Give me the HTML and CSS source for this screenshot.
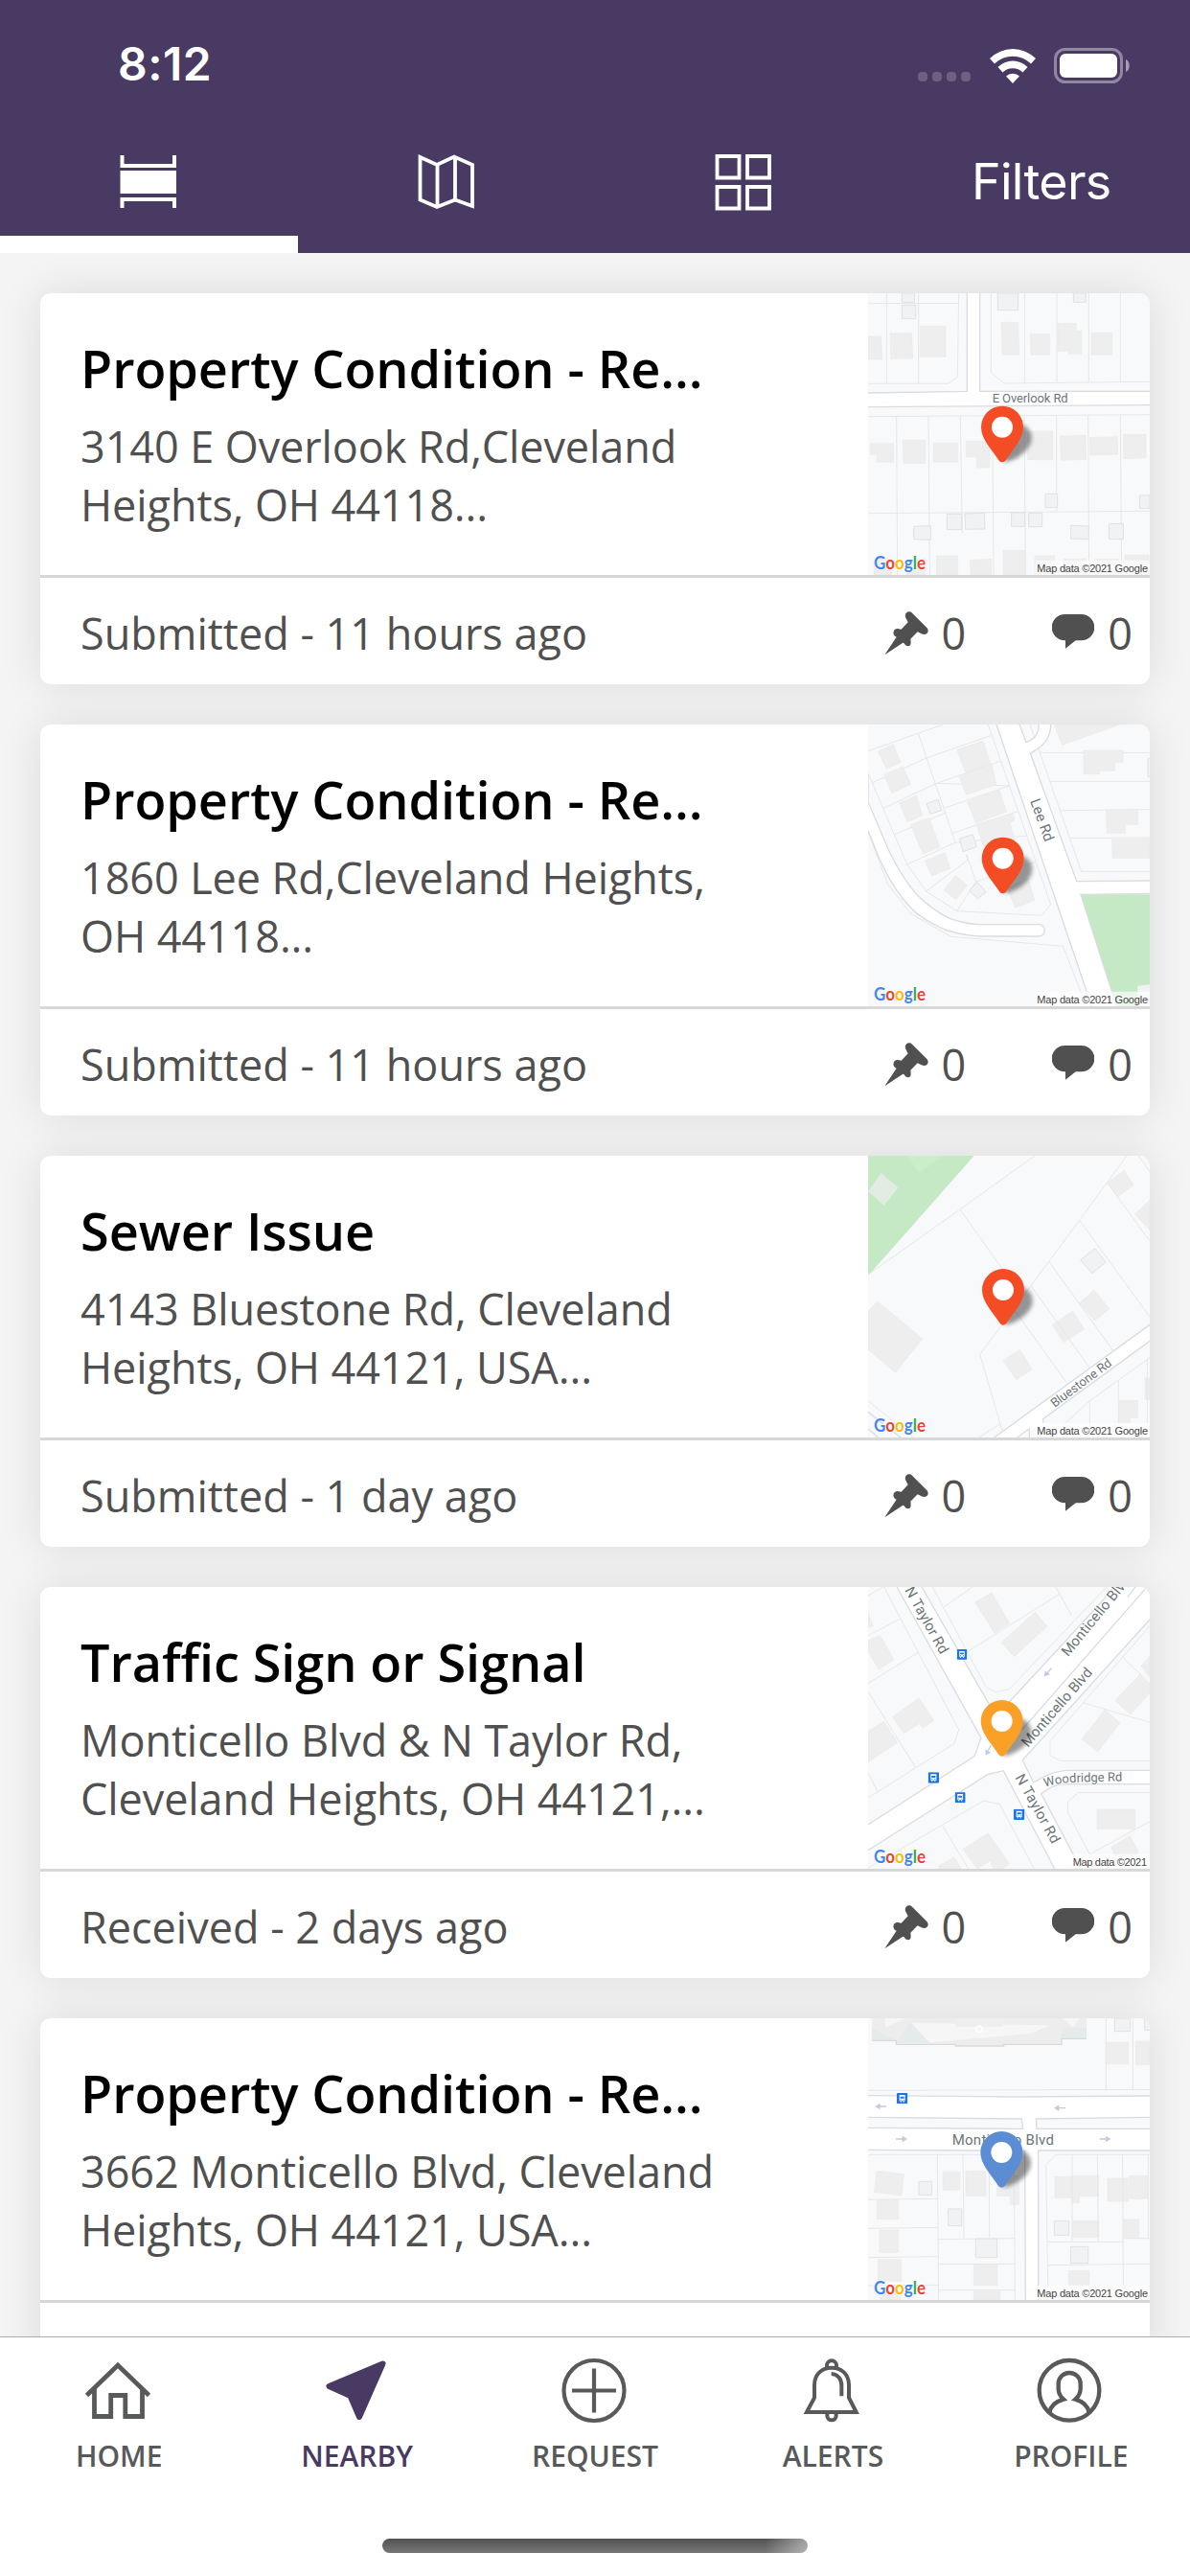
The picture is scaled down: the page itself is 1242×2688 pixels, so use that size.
FILE: index.html
```html
<!DOCTYPE html>
<html lang="en">
<head>
    <meta charset="UTF-8">
    <meta name="viewport" content="width=device-width, initial-scale=1.0">
    <title>Nearby</title>
    <link rel="stylesheet" href="styles.css">
</head>
<body>
    <!-- shared shapes -->
    <svg class="defs" width="0" height="0">
        <defs>
            <filter id="blur" x="-50%" y="-50%" width="200%" height="200%"><feGaussianBlur stdDeviation="7"/></filter>
            <symbol id="marker" viewBox="-80 -190 200 220">
                <path d="M4 0C34 -2 92 -36 92 -76C92 -92 84 -108 62 -118L10 -40Z" fill="#000" opacity=".4" filter="url(#blur)"/>
                <path d="M0 0c-8 0-11-6-16-14C-36-44-66-74-66-110a66 66 0 0 1 132 0C66-74 36-44 16-14C11-6 8 0 0 0Z" fill="currentColor"/>
                <circle cx="0" cy="-110" r="33" fill="#fff"/>
            </symbol>
            <symbol id="bus" viewBox="0 0 34 34">
                <rect width="34" height="34" rx="3" fill="#1a73e8"/>
                <path d="M8 6h18v19h-3v4h-3v-4h-6v4h-3v-4H8z" fill="#fff"/>
                <path d="M11 11h12v6H11zM11 20h3v3h-3zM20 20h3v3h-3z" fill="#1a73e8"/>
            </symbol>
            <symbol id="arrow" viewBox="0 0 36 24">
                <path d="M0 12L16 2V10H36V14H16V22Z" fill="#c5c9dd"/>
            </symbol>
            <symbol id="pushpin" viewBox="0 0 138 138">
                <path d="M1 136L38 80C24 76 25 54 42 54L53 56L74 34L67 20C60 6 76-6 87 5L133 51C144 64 130 78 116 70L104 64L82 86L83 98C83 112 68 112 62 100L58 98Z" fill="#505050"/>
            </symbol>
            <symbol id="bubble" viewBox="0 0 132 108">
                <path d="M40 0H92A40 40 0 0 1 92 82H74L42 107V82H40A40 40 0 0 1 40 0Z" fill="#505050"/>
            </symbol>
            <symbol id="google" viewBox="48 48 882 882">
                <text class="logo" x="66" y="911" textLength="162" lengthAdjust="spacingAndGlyphs"><tspan fill="#4285f4">G</tspan><tspan fill="#ea4335">o</tspan><tspan fill="#fbbc05">o</tspan><tspan fill="#4285f4">g</tspan><tspan fill="#34a853">l</tspan><tspan fill="#ea4335">e</tspan></text>
            </symbol>
        </defs>
    </svg>

    <header class="header">
        <div class="status-bar">
            <span class="time">8:12</span>
            <div class="status-icons">
                <div class="signal"><i></i><i></i><i></i><i></i></div>
                <svg class="wifi" viewBox="0 0 48 37">
                    <path d="M0 11A34 34 0 0 1 48 11L43 16.5A27 27 0 0 0 5 16.5ZM8.500 20A22 22 0 0 1 39.500 20L34.500 25.500A15 15 0 0 0 13.500 25.500ZM17 29.500A10 10 0 0 1 31 29.500L24 37Z" fill="#fff"/>
                </svg>
                <svg class="battery" viewBox="0 0 80 37">
                    <rect x="1.500" y="1.500" width="69" height="34" rx="10" fill="none" stroke="#fff" stroke-opacity=".4" stroke-width="3"/>
                    <rect x="6" y="6" width="60" height="25" rx="6" fill="#fff"/>
                    <path d="M75 12C80 14 80 23 75 25Z" fill="#fff" fill-opacity=".5"/>
                </svg>
            </div>
        </div>
        <nav class="views">
            <a class="view active">
                <svg viewBox="0 0 60 60" fill="none" stroke="#fff" stroke-width="4">
                    <path d="M2.500 2V13H57V2M2.500 57V48H57V57"/>
                    <rect x=".5" y="18" width="58.500" height="24" fill="#fff" stroke="none"/>
                </svg>
            </a>
            <a class="view">
                <svg viewBox="0 0 60 60" fill="none" stroke="#fff" stroke-width="3.800">
                    <path d="M2.500 4L20 12L38 3.500L57 12V55L39 48.500L20 56L2.500 48.500ZM20.500 12V55M39 4V48"/>
                </svg>
            </a>
            <a class="view">
                <svg viewBox="0 0 60 60" fill="none" stroke="#fff" stroke-width="3.800">
                    <path d="M2.500 3H25.500V25.500H2.500ZM34 3H57V25.500H34ZM2.500 35H25.500V57.500H2.500ZM34 35H57V57.500H34Z"/>
                </svg>
            </a>
            <a class="view filters">Filters</a>
        </nav>
    </header>

    <main class="list">
        <article class="card">
            <div class="card-body">
                <div class="info">
                    <h2>Property Condition - Re...</h2>
                    <p>3140 E Overlook Rd,Cleveland<br>Heights, OH 44118...</p>
                </div>
                <svg class="map" viewBox="48 48 882 882">
                    <g class="parcel">
                        <path d="M48 80H332M106 48V331M206 48V331M332 48L328 310L300 331H48M433 48V296L474 330L930 325M538 48V328M639 48V327M739 48V326M838 48V325M48 434L930 428M48 737L930 730M137 434L140 930M237 433L241 930M337 433L343 800M437 433L441 930M537 432L541 930M638 431V731M737 430L740 930M838 430L842 930"/>
                    </g>
                    <g class="house">
                        <path d="M48 183H89L92 255H48ZM117 174L185 173L188 251L119 253ZM211 151H291V247H211ZM465 139H518L521 241H469ZM556 176H617V241H558ZM642 142H700V165H716V238H676V230H642ZM747 172H812V241H747ZM55 518H128V577H76V553H55ZM157 508H227V580H159ZM253 517H329V577H253ZM355 511H429V594H388V560H355ZM450 520H520V568H450ZM548 480H626V569H548ZM649 496L729 492L731 568L652 571ZM742 500L828 497L830 552L744 556ZM847 490H918V562L849 566ZM262 870H329V930H262ZM367 883L434 880V930H370ZM471 853H540V930H471ZM570 870H632V930H570ZM660 880H730V930H660ZM760 880H832V930H760ZM853 868H927V930H853ZM67 878H122V930H67ZM168 880H228V930H168Z"/>
                    </g>
                    <g class="shed">
                        <path d="M154 48H194V76H154ZM154 85H197V128H154ZM454 48H518V101H454ZM691 48H730V76H691ZM603 676H641V719H603ZM898 681H930V721H898ZM191 778L244 776V820L191 818ZM295 739H341V788H295ZM351 738L412 736L414 786L353 787ZM497 735H539V778H497ZM551 736H593V779H551ZM683 775L739 777V818L683 816ZM802 770L847 769V818H802Z"/>
                    </g>
                    <path class="road" d="M358 48V355L48 360V404L930 398V355H398V48Z"/>
                    <path class="kerb" d="M358 48V355L48 360M48 404L930 398M930 355H398V48"/>
                    <text class="street" x="437" y="390" textLength="237">E Overlook Rd</text>
                    <use href="#marker" x="388" y="387" width="200" height="220" color="#f44d25"/>
                    <use href="#google" x="48" y="48" width="882" height="882"/>
                    <rect class="credit-bg" x="571" y="884" width="359" height="46"/>
                    <text class="credit" x="577" y="920" textLength="347">Map data ©2021 Google</text>
                </svg>
            </div>
            <div class="card-footer">
                <span>Submitted - 11 hours ago</span>
                <div class="stats">
                    <span class="stat"><svg class="pushpin"><use href="#pushpin"/></svg>0</span>
                    <span class="stat"><svg class="bubble"><use href="#bubble"/></svg>0</span>
                </div>
            </div>
        </article>

        <article class="card">
            <div class="card-body">
                <div class="info">
                    <h2>Property Condition - Re...</h2>
                    <p>1860 Lee Rd,Cleveland Heights,<br>OH 44118...</p>
                </div>
                <svg class="map" viewBox="48 48 882 882">
                    <g class="parcel">
                        <path d="M48 131L283 48M205 75L321 416M424 48L620 612L592 646L326 632L230 570L170 486L48 200M62 230L230 153L432 83M96 310L258 234L464 162M132 392L290 324M260 232L490 240M288 309L490 240M313 388L516 320M170 486L320 418L546 396M230 570L360 472L356 455L386 540L326 632M386 540L572 478M555 48L716 508H930M586 136H930M618 226H930M652 317L930 314M683 404L930 403M48 385L110 548L182 640L308 712L658 742L720 900"/>
                    </g>
                    <g class="house">
                        <path d="M79 132L127 110L150 167L106 187ZM98 205L157 180L182 235L123 263ZM146 293L199 271L218 333L171 353ZM181 362L239 340L273 432L220 453ZM226 475L289 449L305 499L247 522ZM285 567L322 520L359 551L323 596ZM326 127L408 99L432 170L353 198ZM333 210L435 172L449 236L356 268ZM359 290L459 252L482 321L386 356ZM388 360L501 326L507 346L493 356L508 410L408 430ZM484 560L550 530L569 598L509 622ZM631 48H836L656 112ZM723 129H846V166H820V193H773V203H723ZM793 315H893V361H854V388H796ZM812 402H930V466H813Z"/>
                    </g>
                    <g class="shed">
                        <path d="M231 296L268 283L278 317L243 328ZM334 405L376 392L388 431L345 446ZM390 541L417 572L391 594L365 567ZM924 155H940V212H924Z"/>
                    </g>
                    <path d="M714 580H930V930H826Z" fill="#c5e8c5"/>
                    <path d="M892 930V866L930 862V930Z" fill="#f1f2f4"/>
                    <path class="road" d="M48 290L112 440C140 500 170 545 200 580C240 620 270 640 305 656C340 668 370 674 400 674H583A18 18 0 0 1 583 711H400C360 709 320 700 288 690C240 668 210 650 190 630C130 570 100 505 78 455L48 380ZM450 48L748 930H826L714 580L930 577V537L701 539L556 138C600 115 620 90 620 48H583C583 75 570 95 543 104L522 48Z"/>
                    <path class="kerb" d="M48 205V290L112 440C140 500 170 545 200 580C240 620 270 640 305 656C340 668 370 674 400 674H583A18 18 0 0 1 583 711H400C360 709 320 700 288 690C240 668 210 650 190 630C130 570 100 505 78 455L48 380M450 48L748 930M826 930L714 580L930 577M930 537L701 539L556 138C600 115 620 90 620 48M583 48C583 75 570 95 543 104L522 48"/>
                    <text class="street large" transform="translate(555 287) rotate(70)" textLength="138">Lee Rd</text>
                    <use href="#marker" x="390" y="387" width="200" height="220" color="#f44d25"/>
                    <use href="#google" x="48" y="48" width="882" height="882"/>
                    <rect class="credit-bg" x="571" y="884" width="359" height="46"/>
                    <text class="credit" x="577" y="920" textLength="347">Map data ©2021 Google</text>
                </svg>
            </div>
            <div class="card-footer">
                <span>Submitted - 11 hours ago</span>
                <div class="stats">
                    <span class="stat"><svg class="pushpin"><use href="#pushpin"/></svg>0</span>
                    <span class="stat"><svg class="bubble"><use href="#bubble"/></svg>0</span>
                </div>
            </div>
        </article>

        <article class="card">
            <div class="card-body">
                <div class="info">
                    <h2>Sewer Issue</h2>
                    <p>4143 Bluestone Rd, Cleveland<br>Heights, OH 44121, USA...</p>
                </div>
                <svg class="map" viewBox="48 48 882 882">
                    <path d="M48 48H380L48 424Z" fill="#c5e8c5"/>
                    <path d="M170 48H282L210 102Z" fill="#caedca"/>
                    <path d="M89 102L142 148L98 203L48 160Z" fill="#e2ece2"/>
                    <g class="house">
                        <path d="M77 504L219 621L133 727L48 655V535ZM797 133L850 94L879 139L830 176ZM883 232L930 186V280ZM708 510L756 469L803 527L758 564ZM624 577L690 534L725 591L660 632ZM471 689L523 655L562 717L512 749ZM833 814H892V868H868V885H833ZM915 744H930V811H915Z"/>
                    </g>
                    <g class="shed">
                        <path d="M713 375L758 338L792 381L750 416Z"/>
                    </g>
                    <g class="parcel">
                        <path d="M48 420L336 216L570 48M336 216L470 405M858 48L710 250L398 670L468 908M895 48L930 98M797 133L930 315M710 250L930 552M615 380L815 658M558 455L742 712M510 535L672 762M48 815L190 930M460 888L395 930M930 680L742 815L660 890M742 815V885M832 750V885M922 685V885"/>
                    </g>
                    <path class="road" d="M443 930L930 577V628L596 872V884L514 930Z"/>
                    <path class="kerb" d="M443 930L930 577M930 628L596 872V884M514 930L553 903V930M48 850L150 930M48 903L80 930"/>
                    <text class="street" transform="translate(632 837) rotate(-36.500)" textLength="226">Bluestone Rd</text>
                    <use href="#marker" x="391" y="388" width="200" height="220" color="#f44d25"/>
                    <use href="#google" x="48" y="48" width="882" height="882"/>
                    <rect class="credit-bg" x="571" y="884" width="359" height="46"/>
                    <text class="credit" x="577" y="920" textLength="347">Map data ©2021 Google</text>
                </svg>
            </div>
            <div class="card-footer">
                <span>Submitted - 1 day ago</span>
                <div class="stats">
                    <span class="stat"><svg class="pushpin"><use href="#pushpin"/></svg>0</span>
                    <span class="stat"><svg class="bubble"><use href="#bubble"/></svg>0</span>
                </div>
            </div>
        </article>

        <article class="card">
            <div class="card-body">
                <div class="info">
                    <h2>Traffic Sign or Signal</h2>
                    <p>Monticello Blvd &amp; N Taylor Rd,<br>Cleveland Heights, OH 44121,...</p>
                </div>
                <svg class="map" viewBox="48 48 882 882">
                    <g class="house">
                        <path d="M383 96L435 66L491 162L444 192ZM465 222L571 127L609 171L506 266ZM48 215L86 200L129 276L81 307L48 250ZM124 455L207 396L254 466L219 490L209 475L161 506ZM48 500L98 468L140 535L48 596ZM822 403L899 321L930 350V380L869 447ZM903 295L930 265V330ZM717 524L790 432L837 473L767 564ZM765 744H884V805H765ZM809 862L868 827L896 878L880 890H822ZM345 868L424 819L491 915L470 930H440L430 905L390 930ZM270 920L318 894L340 930H270ZM48 130L64 170L48 175Z"/>
                    </g>
                    <g class="parcel">
                        <path d="M98 48L332 495L318 538L48 708M48 200L148 148M48 350L206 252M48 375L196 612M48 630L78 688M250 48L418 362L448 377L490 368L795 48M287 110L375 48M360 250L648 70M635 48L686 138M930 170L618 530V575L650 592H930M845 268L905 325M720 410L930 472M930 692H705L674 720V755L742 885M742 885L930 782M48 928L410 717L460 728L568 930M282 797L362 930M150 870L172 930M48 75L95 48"/>
                    </g>
                    <path class="road" d="M138 48L402 520L381 578L48 792V872L422 635L472 623L632 930H714L590 695C620 672 640 665 670 665H930V622H680C630 622 600 640 566 660L532 590L930 150V48H822L490 408L432 430L216 48Z"/>
                    <path class="kerb" d="M138 48L402 520L381 578L48 792M48 872L422 635L472 623L632 930M714 930L590 695C620 672 640 665 670 665H930M930 622H680C630 622 600 640 566 660L532 590L930 150M822 48L490 408M430 420L216 48M915 55L530 495M885 48L860 80"/>
                    <use href="#bus" x="326" y="242" width="32" height="34"/>
                    <use href="#bus" x="236" y="628" width="34" height="34"/>
                    <use href="#bus" x="320" y="690" width="33" height="34"/>
                    <use href="#bus" x="504" y="743" width="34" height="34"/>
                    <g transform="translate(599 328) rotate(-48)"><use href="#arrow" y="-12" width="36" height="24"/></g>
                    <g transform="translate(416 575) rotate(-62)"><use href="#arrow" y="-12" width="36" height="24"/></g>
                    <text class="street large" transform="translate(162 58) rotate(61)" textLength="232">N Taylor Rd</text>
                    <text class="street large" transform="translate(508 644) rotate(61)" textLength="240">N Taylor Rd</text>
                    <text class="street large" transform="translate(674 268) rotate(-50.500)" textLength="310">Monticello Blvd</text>
                    <text class="street large" transform="translate(548 552) rotate(-49)" textLength="312">Monticello Blvd</text>
                    <path id="woodridge" d="M602 675Q640 661 700 659L860 655" fill="none"/>
                    <text class="street"><textPath href="#woodridge">Woodridge Rd</textPath></text>
                    <use href="#marker" x="387" y="388" width="200" height="220" color="#fba026"/>
                    <use href="#google" x="48" y="48" width="882" height="882"/>
                    <rect class="credit-bg" x="684" y="884" width="246" height="46"/>
                    <text class="credit" x="689" y="920" textLength="232">Map data ©2021</text>
                </svg>
            </div>
            <div class="card-footer">
                <span>Received - 2 days ago</span>
                <div class="stats">
                    <span class="stat"><svg class="pushpin"><use href="#pushpin"/></svg>0</span>
                    <span class="stat"><svg class="bubble"><use href="#bubble"/></svg>0</span>
                </div>
            </div>
        </article>

        <article class="card">
            <div class="card-body">
                <div class="info">
                    <h2>Property Condition - Re...</h2>
                    <p>3662 Monticello Blvd, Cleveland<br>Heights, OH 44121, USA...</p>
                </div>
                <svg class="map" viewBox="48 48 882 882">
                    <path d="M60 48H732V112H654V130H473V135H322V130H136V118H60Z" fill="#ededed"/>
                    <path d="M60 78L136 118H60ZM180 62L240 125H136ZM654 78H732V112H654Z" fill="#e5eaeb"/>
                    <path d="M100 48H166L103 76ZM184 62L616 70L560 95L240 124ZM655 48H710L690 75Z" fill="#f6f6f6"/>
                    <path d="M60 118H136V130H322V135H473V130H654V112H732" fill="none" stroke="#d9dadb" stroke-width="4"/>
                    <path d="M324 48H470V75H324Z" fill="#eee"/>
                    <circle cx="396" cy="82" r="10" fill="none" stroke="#fff" stroke-width="5"/>
                    <g class="house">
                        <path d="M793 124H863V191H793ZM886 121H930V193H886ZM76 526L160 536L153 603L67 592ZM282 529H335V586H282ZM354 527H417V604H354ZM452 540H520V631H493V604H452ZM76 617H143V677H76ZM84 711H143V781H84ZM79 803H152V871H79ZM379 819H453V884H379ZM379 903H461V930H379ZM633 544H686V610H633ZM686 541H770V605H709V626H686ZM798 549H862V621H798ZM866 541H924V613H866ZM689 682H770V734H689ZM848 678H896V733H848ZM676 838H741V884H676ZM86 905H150V930H86Z"/>
                    </g>
                    <g class="shed">
                        <path d="M820 48H869V89H820ZM914 48H940V85H914ZM207 559H248V601H207ZM299 645H341V698H299ZM385 738H452V797H385ZM631 683H677V727H631ZM682 763H737V815H682Z"/>
                    </g>
                    <g class="parcel">
                        <path d="M793 48V272M877 48V272M48 274L930 271M48 475H505L508 930M265 475L269 930M345 475L348 737M427 475L428 737M48 616L266 613M48 706L267 703M48 797L268 794M48 885L268 883M268 740L508 737M269 818L508 817M269 899H508M930 475H636L605 506L611 884M687 475V748M766 475L769 748M845 475L847 884M925 475V735M611 748H847M847 737H930M611 821L930 817"/>
                    </g>
                    <path class="road" d="M48 290L930 292V460H581V930H541L539 463L48 460Z"/>
                    <path d="M48 358L529 363L533 394L48 391ZM574 363L930 358V394H576Z" fill="#f8f9fb"/>
                    <path class="kerb" d="M48 290L510 294L930 291M48 358L529 363L533 394L48 391M930 358L574 363L576 394H930M48 460L539 463L541 930M930 462H581V930"/>
                    <use href="#bus" x="138" y="282" width="34" height="34"/>
                    <use href="#arrow" x="70" y="312" width="36" height="24"/>
                    <use href="#arrow" x="630" y="317" width="36" height="24"/>
                    <g transform="translate(171 426) rotate(180)"><use href="#arrow" y="-12" width="36" height="24"/></g>
                    <g transform="translate(808 426) rotate(180)"><use href="#arrow" y="-12" width="36" height="24"/></g>
                    <text class="street large" x="311" y="444" textLength="319">Monticello Blvd</text>
                    <use href="#marker" x="386" y="388" width="200" height="220" color="#5a8dd3"/>
                    <use href="#google" x="48" y="48" width="882" height="882"/>
                    <rect class="credit-bg" x="571" y="884" width="359" height="46"/>
                    <text class="credit" x="577" y="920" textLength="347">Map data ©2021 Google</text>
                </svg>
            </div>
            <div class="card-footer">
                <span></span>
                <div class="stats">
                    <span class="stat"><svg class="pushpin"><use href="#pushpin"/></svg>0</span>
                    <span class="stat"><svg class="bubble"><use href="#bubble"/></svg>0</span>
                </div>
            </div>
        </article>
    </main>

    <footer class="tab-bar">
        <nav class="tabs">
            <a class="tab">
                <svg viewBox="0 0 72 72" fill="none" stroke="currentColor" stroke-width="4.800">
                    <path d="M3.500 41.500L36 10L68.500 41.500M11.500 35V63.500H28.700V41.500H43.800V63.500H61.500V35"/>
                </svg>
                HOME
            </a>
            <a class="tab active">
                <svg viewBox="0 0 72 72" fill="currentColor" stroke="currentColor" stroke-width="6" stroke-linejoin="round">
                    <path d="M64.500 8.500L8.500 32L30.500 42L40 64Z"/>
                </svg>
                NEARBY
            </a>
            <a class="tab">
                <svg viewBox="0 0 72 72" fill="none" stroke="currentColor" stroke-width="4.200">
                    <circle cx="36" cy="36.500" r="31.500"/>
                    <path d="M13 36.500H59M36 13.500V59.500"/>
                </svg>
                REQUEST
            </a>
            <a class="tab">
                <svg viewBox="0 0 216 216" fill="none" stroke="currentColor" stroke-width="12">
                    <path d="M30 177L54 132V92C54 58 78 38 108 38S162 58 162 92V132L185 177ZM93 37V31A15 15 0 0 1 123 31V37M94 181V188A14 14 0 0 0 122 188V181M107 57C127 58 139 74 139 94V127"/>
                </svg>
                ALERTS
            </a>
            <a class="tab">
                <svg viewBox="0 0 216 216" fill="none" stroke="currentColor" stroke-width="13">
                    <circle cx="108" cy="109" r="94"/>
                    <path d="M46 178C50 158 64 144 90 137C79 127 74 118 74 104V88A34.500 34 0 0 1 143 88V104C143 118 138 127 127 137C152 144 166 158 170 178"/>
                </svg>
                PROFILE
            </a>
        </nav>
        <div class="home-indicator"></div>
    </footer>
</body>
</html>
```
FILE: styles.css
```css
* {
    box-sizing: border-box;
}

body {
    margin: 0;
    width: 1242px;
    height: 2688px;
    display: flex;
    flex-direction: column;
    overflow: hidden;
    background-color: #f4f4f4;
    color: #505050;
    font-family: "Open Sans", "Noto Sans", sans-serif;
}

svg {
    display: block;
}

.defs {
    position: absolute;
}

/* header */
.header {
    height: 264px;
    flex: none;
    background-color: #483a62;
    color: #fff;
    font-family: Inter, sans-serif;
}

.status-bar {
    height: 136px;
    display: flex;
    justify-content: space-between;
    align-items: center;
    padding: 0 62px 0 123px;
}

.time {
    font-size: 48px;
    line-height: 58px;
    padding-bottom: 2px;
    font-weight: 600;
    letter-spacing: 0.5px;
}

.status-icons {
    display: flex;
    align-items: flex-end;
}

.signal {
    display: flex;
    gap: 5px;
    margin: 0 20px 2px 0;
}

.signal i {
    width: 10px;
    height: 10px;
    border-radius: 4px;
    background-color: rgba(255, 255, 255, 0.2);
}

.wifi {
    width: 48px;
    height: 37px;
    margin-right: 19px;
}

.battery {
    width: 80px;
    height: 37px;
}

.views {
    height: 128px;
    display: flex;
}

.view {
    flex: 1;
    display: flex;
    justify-content: center;
    padding-top: 24px;
    border-bottom: 18px solid transparent;
}

.view.active {
    border-bottom-color: #fff;
}

.view svg {
    width: 60px;
    height: 60px;
}

.view.filters {
    padding-top: 21px;
    font-size: 52px;
    line-height: 66px;
    font-weight: 400;
    letter-spacing: -0.7px;
}

/* request cards */
.list {
    flex: 1;
    min-height: 0;
    overflow: hidden;
    display: flex;
    flex-direction: column;
    gap: 42px;
    padding: 42px;
}

.card {
    flex: none;
    height: 408px;
    border-radius: 11px;
    background-color: #fff;
    box-shadow: 0 0 45px rgba(0, 0, 0, 0.1);
    overflow: hidden;
}

.card-body {
    height: 297px;
    display: flex;
    justify-content: space-between;
    border-bottom: 3px solid #d8d8d8;
}

.info {
    padding: 41px 0 0 42px;
}

.info h2 {
    margin: 0 0 14px;
    color: #000;
    font-size: 54px;
    line-height: 74px;
    font-weight: 600;
    letter-spacing: -0.06px;
    white-space: nowrap;
}

.info p {
    margin: 0;
    font-size: 45px;
    line-height: 61px;
    letter-spacing: -0.08px;
    white-space: nowrap;
}

.card-footer {
    height: 111px;
    display: flex;
    justify-content: space-between;
    align-items: center;
    padding: 4px 18px 0 42px;
    font-size: 45px;
}

.stats {
    display: flex;
    gap: 90px;
}

.stat {
    display: flex;
    align-items: center;
    gap: 14px;
}

.pushpin {
    width: 46px;
    height: 46px;
}

.bubble {
    width: 44px;
    height: 36px;
    margin-bottom: 3px;
}

/* map thumbnails */
.map {
    width: 294px;
    height: 294px;
    background-color: #f8f9fb;
}

.parcel path {
    fill: none;
    stroke: #e6e7e9;
    stroke-width: 3;
}

.house path {
    fill: #eeeeee;
    stroke: #e6e6e6;
    stroke-width: 1.5;
}

.shed path {
    fill: #f1f2f4;
    stroke: #dfe1e4;
    stroke-width: 3;
}

.road {
    fill: #fff;
}

.kerb {
    fill: none;
    stroke: #d9dce0;
    stroke-width: 4;
}

.street {
    font-family: Roboto, sans-serif;
    font-size: 39px;
    fill: #6b7679;
    stroke: #fff;
    stroke-width: 5;
    paint-order: stroke;
}

.street.large {
    font-size: 45px;
}

.logo {
    font-family: Lato, sans-serif;
    font-size: 54px;
    font-weight: 700;
    stroke: #fff;
    stroke-width: 4;
    paint-order: stroke;
}

.credit-bg {
    fill: #fff;
    fill-opacity: 0.65;
}

.credit {
    font-family: "Liberation Sans", Arial, sans-serif;
    font-size: 33px;
    fill: #444;
}

/* bottom tabs */
.tab-bar {
    height: 250px;
    flex: none;
    background-color: #fff;
    border-top: 1px solid #acacac;
}

.tabs {
    display: flex;
    height: 210px;
}

.tab {
    flex: 1;
    display: flex;
    flex-direction: column;
    align-items: center;
    padding-top: 19px;
    color: #58595b;
    font-size: 30px;
    line-height: 41px;
    font-weight: 600;
}

.tab.active {
    color: #483a62;
}

.tab svg {
    width: 72px;
    height: 72px;
    margin: 0 3px 12px 0;
}

.home-indicator {
    width: 444px;
    height: 15px;
    margin: 0 auto;
    border-radius: 8px;
    background: linear-gradient(to right, transparent 90%, rgba(255, 255, 255, 0.45)), linear-gradient(#525252, #777);
}
```
